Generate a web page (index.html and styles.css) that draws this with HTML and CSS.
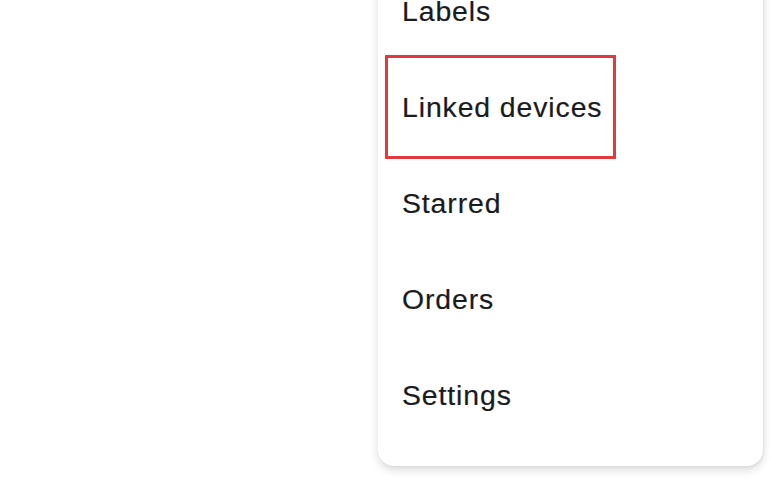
FILE: index.html
```html
<!DOCTYPE html>
<html lang="en">
<head>
<meta charset="utf-8">
<title>Menu</title>
<link rel="stylesheet" href="styles.css">
</head>
<body>
<div class="page">
  <nav class="menu">
    <div class="item">Labels</div>
    <div class="item item-highlight">Linked devices<span class="highlight-box"></span></div>
    <div class="item">Starred</div>
    <div class="item">Orders</div>
    <div class="item">Settings</div>
  </nav>
</div>
</body>
</html>
```
FILE: styles.css
```css
html, body {
  margin: 0;
  padding: 0;
  background: #ffffff;
  overflow: hidden;
}
body {
  width: 770px;
  height: 480px;
  font-family: "Liberation Sans", Arial, Helvetica, sans-serif;
}
.page {
  display: flex;
  padding-left: 378px;
}
.menu {
  width: 385px;
  margin-top: -37px;
  padding-bottom: 23px;
  background: #ffffff;
  border-radius: 0 0 16px 16px;
  box-shadow: 0 4px 10px rgba(0, 0, 0, 0.14), 1px 1px 3px rgba(0, 0, 0, 0.06);
  display: flex;
  flex-direction: column;
}
.item {
  position: relative;
  height: 96px;
  line-height: 96px;
  padding-left: 24px;
  font-size: 28.4px;
  letter-spacing: 0.9px;
  color: #1a1b1e;
  -webkit-text-stroke: 0.2px #1a1b1e;
}
.highlight-box {
  position: absolute;
  left: 7px;
  top: -4px;
  width: 231px;
  height: 104px;
  box-sizing: border-box;
  border: 3px solid #e23a3c;
}
```
